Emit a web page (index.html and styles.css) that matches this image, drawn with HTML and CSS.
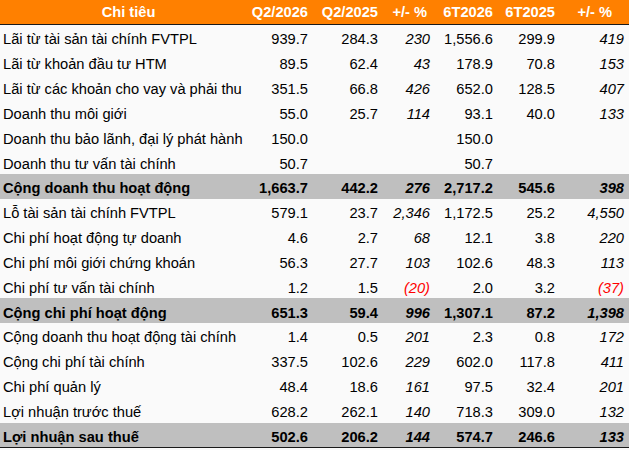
FILE: index.html
```html
<!DOCTYPE html>
<html lang="vi">
<head>
<meta charset="utf-8">
<title>Kết quả kinh doanh</title>
<link rel="stylesheet" href="styles.css">
</head>
<body>
<div class="sheet">
  <div class="row head">
    <div class="c name">Chi tiêu</div><div class="c">Q2/2026</div><div class="c">Q2/2025</div><div class="c pct">+/- %</div><div class="c">6T2026</div><div class="c">6T2025</div><div class="c pct last">+/- %</div>
  </div>
  <div class="row"><div class="c name">Lãi từ tài sản tài chính FVTPL</div><div class="c">939.7</div><div class="c">284.3</div><div class="c pct">230</div><div class="c">1,556.6</div><div class="c">299.9</div><div class="c pct last">419</div></div>
  <div class="row"><div class="c name">Lãi từ khoản đầu tư HTM</div><div class="c">89.5</div><div class="c">62.4</div><div class="c pct">43</div><div class="c">178.9</div><div class="c">70.8</div><div class="c pct last">153</div></div>
  <div class="row"><div class="c name">Lãi từ các khoản cho vay và phải thu</div><div class="c">351.5</div><div class="c">66.8</div><div class="c pct">426</div><div class="c">652.0</div><div class="c">128.5</div><div class="c pct last">407</div></div>
  <div class="row"><div class="c name">Doanh thu môi giới</div><div class="c">55.0</div><div class="c">25.7</div><div class="c pct">114</div><div class="c">93.1</div><div class="c">40.0</div><div class="c pct last">133</div></div>
  <div class="row"><div class="c name">Doanh thu bảo lãnh, đại lý phát hành</div><div class="c">150.0</div><div class="c"></div><div class="c pct"></div><div class="c">150.0</div><div class="c"></div><div class="c pct last"></div></div>
  <div class="row"><div class="c name">Doanh thu tư vấn tài chính</div><div class="c">50.7</div><div class="c"></div><div class="c pct"></div><div class="c">50.7</div><div class="c"></div><div class="c pct last"></div></div>
  <div class="row total"><div class="c name">Cộng doanh thu hoạt động</div><div class="c">1,663.7</div><div class="c">442.2</div><div class="c pct">276</div><div class="c">2,717.2</div><div class="c">545.6</div><div class="c pct last">398</div></div>
  <div class="row"><div class="c name">Lỗ tài sản tài chính FVTPL</div><div class="c">579.1</div><div class="c">23.7</div><div class="c pct">2,346</div><div class="c">1,172.5</div><div class="c">25.2</div><div class="c pct last">4,550</div></div>
  <div class="row"><div class="c name">Chi phí hoạt động tự doanh</div><div class="c">4.6</div><div class="c">2.7</div><div class="c pct">68</div><div class="c">12.1</div><div class="c">3.8</div><div class="c pct last">220</div></div>
  <div class="row"><div class="c name">Chi phí môi giới chứng khoán</div><div class="c">56.3</div><div class="c">27.7</div><div class="c pct">103</div><div class="c">102.6</div><div class="c">48.3</div><div class="c pct last">113</div></div>
  <div class="row"><div class="c name">Chi phí tư vấn tài chính</div><div class="c">1.2</div><div class="c">1.5</div><div class="c pct neg">(20)</div><div class="c">2.0</div><div class="c">3.2</div><div class="c pct last neg">(37)</div></div>
  <div class="row total"><div class="c name">Cộng chi phí hoạt động</div><div class="c">651.3</div><div class="c">59.4</div><div class="c pct">996</div><div class="c">1,307.1</div><div class="c">87.2</div><div class="c pct last">1,398</div></div>
  <div class="row"><div class="c name">Cộng doanh thu hoạt động tài chính</div><div class="c">1.4</div><div class="c">0.5</div><div class="c pct">201</div><div class="c">2.3</div><div class="c">0.8</div><div class="c pct last">172</div></div>
  <div class="row"><div class="c name">Cộng chi phí tài chính</div><div class="c">337.5</div><div class="c">102.6</div><div class="c pct">229</div><div class="c">602.0</div><div class="c">117.8</div><div class="c pct last">411</div></div>
  <div class="row"><div class="c name">Chi phí quản lý</div><div class="c">48.4</div><div class="c">18.6</div><div class="c pct">161</div><div class="c">97.5</div><div class="c">32.4</div><div class="c pct last">201</div></div>
  <div class="row"><div class="c name">Lợi nhuận trước thuế</div><div class="c">628.2</div><div class="c">262.1</div><div class="c pct">140</div><div class="c">718.3</div><div class="c">309.0</div><div class="c pct last">132</div></div>
  <div class="row total final"><div class="c name">Lợi nhuận sau thuế</div><div class="c">502.6</div><div class="c">206.2</div><div class="c pct">144</div><div class="c">574.7</div><div class="c">246.6</div><div class="c pct last">133</div></div>
</div>
</body>
</html>
```

FILE: styles.css
```css
html, body {
  margin: 0;
  padding: 0;
  background: #fafafa;
}
body {
  font-family: "Liberation Sans", Arial, sans-serif;
  font-size: 14.67px;
  color: #000;
  width: 629px;
  height: 450px;
  overflow: hidden;
}
.sheet {
  width: 629px;
  border-bottom: 1px solid #1a1a1a;
}
.row {
  display: grid;
  grid-template-columns: 256px 55px 70px 52px 63px 62px 71px;
  height: 24.85px;
}
.c {
  display: flex;
  align-items: flex-end;
  justify-content: flex-end;
  line-height: 17px;
  padding: 0 3px 1.5px 0;
  white-space: nowrap;
  overflow: visible;
}
.c.name {
  justify-content: flex-start;
  padding-left: 3px;
}
.c.pct { font-style: italic; }
.c.last { padding-right: 5px; }
.c.neg { color: #ff0000; }

.head {
  height: 24px;
  background: #ff8000;
  color: #fff;
  font-weight: bold;
  border-bottom: 1px solid #1a1a1a;
}
.head .c {
  font-style: normal;
  padding-bottom: 2.6px;
}
.head .c.name {
  justify-content: center;
  padding-left: 4px;
}
.head .c.pct { padding-right: 6px; }
.head .c.last { padding-right: 17px; }

.total {
  background: #bfbfbf;
  font-weight: bold;
}
```
